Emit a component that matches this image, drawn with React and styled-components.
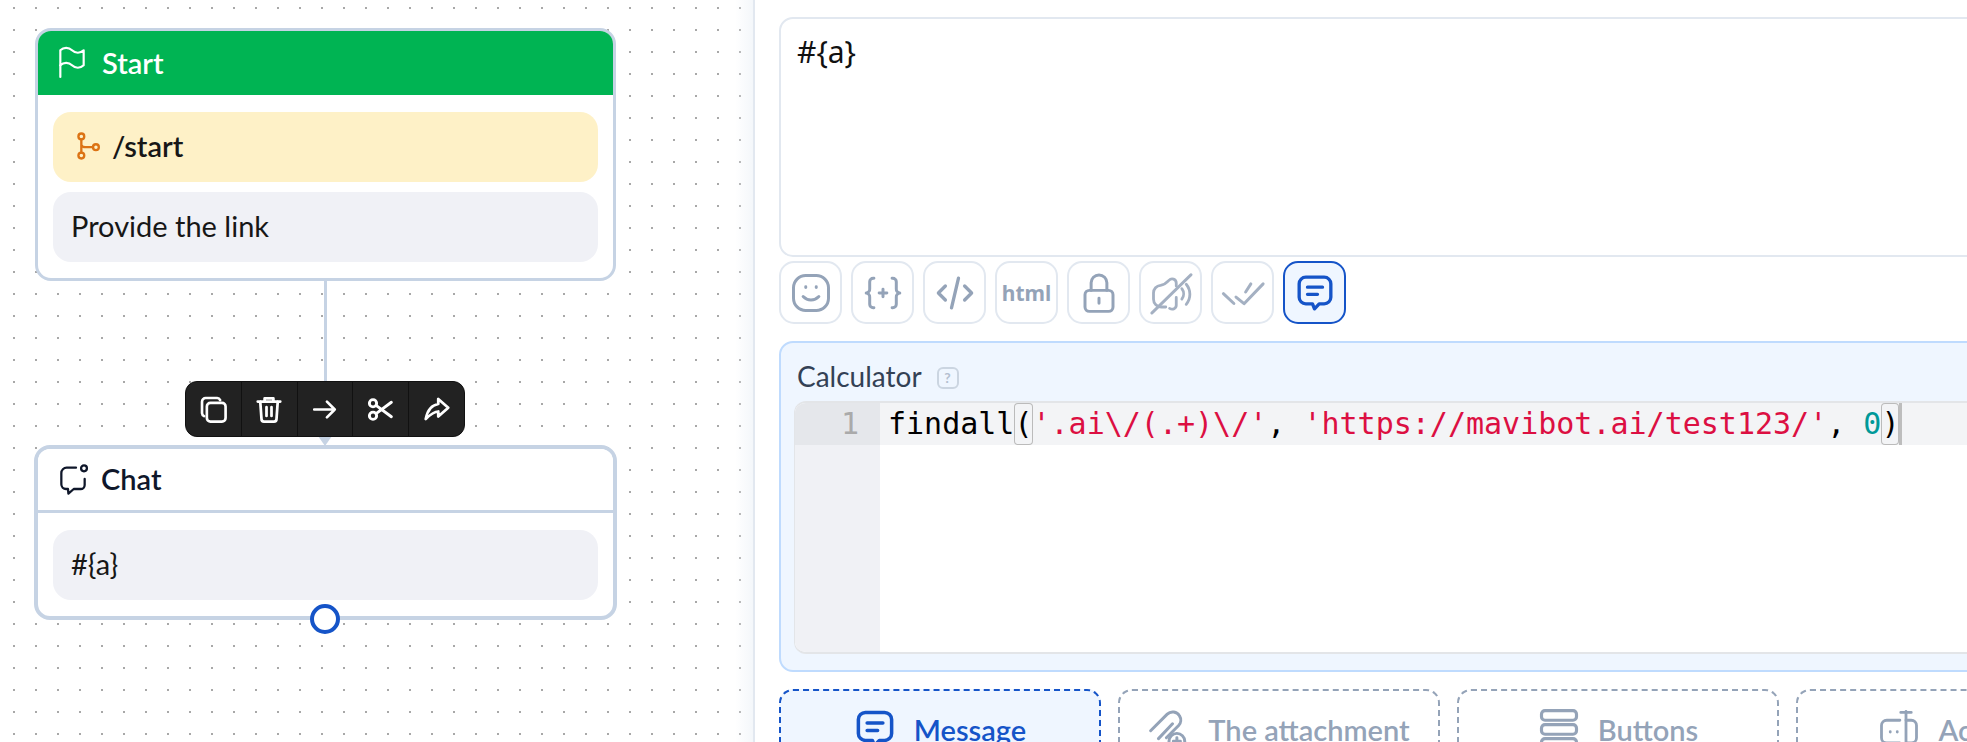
import React from "react";
import styled, { createGlobalStyle } from "styled-components";
import { TbShare3, TbFlag } from "react-icons/tb";

const GlobalStyle = createGlobalStyle`
  html, body {
    margin: 0;
    height: 100%;
    background: #fff;
    overflow: hidden;
  }
  * { box-sizing: border-box; }
`;

const Page = styled.div`
  display: flex;
  width: 1967px;
  height: 742px;
  overflow: hidden;
  font-family: Lato, "Noto Sans", sans-serif;
`;

/* flow canvas */
const Canvas = styled.div`
  position: relative;
  flex: 0 0 755px;
  height: 742px;
  border-right: 2px solid #e2e8f0;
  background-color: #fff;
  background-image:
    linear-gradient(90deg, rgba(241, 245, 249, 0) 735px, rgba(241, 245, 249, 0.8) 753px),
    radial-gradient(circle at center, #a8a8a8 1.2px, transparent 1.5px);
  background-size: 100% 100%, 22px 22px;
  background-position: 0 0, 3px -3px;
`;

const Node = styled.div`
  position: absolute;
  left: ${(p) => p.$x}px;
  top: ${(p) => p.$y}px;
  width: ${(p) => p.$w}px;
  background: #fff;
  border: ${(p) => (p.$selected ? "4px" : "3px")} solid #c6d3e4;
  border-radius: 16px;
  overflow: hidden;
`;

const NodeHead = styled.div`
  display: flex;
  align-items: center;
  gap: ${(p) => (p.$green ? "10px" : "11px")};
  height: 64px;
  padding-left: ${(p) => (p.$green ? "14px" : "20px")};
  padding-bottom: 2px;
  background: ${(p) => (p.$green ? "#00b453" : "#fff")};
  color: ${(p) => (p.$green ? "#fff" : "#0f172a")};
  border-bottom: ${(p) => (p.$green ? "0" : "3px solid #c6d3e4")};
  font-size: 29px;
  font-weight: 600;
`;

const NodeBody = styled.div`
  display: flex;
  flex-direction: column;
  gap: 10px;
  padding: 17px 15px 16px;
`;

const NodeItem = styled.div`
  display: flex;
  align-items: center;
  gap: 12px;
  height: 70px;
  padding: 0 0 3px ${(p) => (p.$yellow ? "19px" : "18px")};
  border-radius: 18px;
  background: ${(p) => (p.$yellow ? "#fef1c7" : "#f0f1f6")};
  color: #171717;
  font-size: 29px;
  font-weight: ${(p) => (p.$yellow ? 600 : 400)};
`;

const Edge = styled.div`
  position: absolute;
  left: 324px;
  top: 278px;
  width: 3px;
  height: 162px;
  background: #c6d3e4;
`;

const EdgeArrow = styled.div`
  position: absolute;
  left: 318px;
  top: 436px;
  border-left: 7px solid transparent;
  border-right: 7px solid transparent;
  border-top: 10px solid #c6d3e4;
`;

const NodeTools = styled.div`
  position: absolute;
  left: 185px;
  top: 381px;
  display: flex;
  width: 280px;
  height: 56px;
  border-radius: 12px;
  background: #222;
  border: 1px solid #111;
  overflow: hidden;
  z-index: 2;
`;

const NodeTool = styled.div`
  display: flex;
  flex: 1;
  align-items: center;
  justify-content: center;
  color: #fff;
  & + & { border-left: 1px solid #111; }
`;

const Handle = styled.div`
  position: absolute;
  left: 310px;
  top: 604px;
  width: 30px;
  height: 30px;
  border-radius: 50%;
  background: #fff;
  border: 4px solid #1554c8;
  z-index: 2;
`;

/* editor side */
const Panel = styled.div`
  flex: 0 0 1400px;
  display: flex;
  flex-direction: column;
  padding: 17px 24px 0;
  & > * { flex-shrink: 0; }
`;

const MessageBox = styled.div`
  height: 240px;
  padding: 15px 16px;
  border: 2px solid #e2e8f0;
  border-radius: 14px;
  font-family: "Noto Sans", sans-serif;
  font-size: 30px;
  line-height: 36px;
  color: #111;
`;

const ToolRow = styled.div`
  display: flex;
  gap: 9px;
  margin-top: 4px;
`;

const ToolBtn = styled.div`
  display: flex;
  align-items: center;
  justify-content: center;
  width: 63px;
  height: 63px;
  border-radius: 15px;
  border: 2px solid ${(p) => (p.$active ? "#1554c8" : "#e2e8f0")};
  background: ${(p) => (p.$active ? "#eff6ff" : "#fff")};
  color: ${(p) => (p.$active ? "#1554c8" : p.$soft ? "#a4b0c2" : "#94a3b8")};
`;

const HtmlLabel = styled.span`
  font-family: "Noto Sans", sans-serif;
  font-size: 21px;
  font-weight: 700;
`;

const CalcBox = styled.div`
  display: flex;
  flex-direction: column;
  height: 331px;
  margin-top: 17px;
  padding: 16px 13px 0;
  border: 2px solid #bfdbfe;
  border-radius: 14px;
  background: #eff6ff;
`;

const CalcLabel = styled.div`
  display: flex;
  align-items: center;
  gap: 15px;
  height: 34px;
  margin-left: 3px;
  color: #334155;
  font-size: 28px;
`;

const HelpMark = styled.span`
  display: flex;
  align-items: center;
  justify-content: center;
  width: 22px;
  height: 22px;
  margin-top: 3px;
  border: 2px solid #cbd5e1;
  border-radius: 6px;
  color: #b4c0d0;
  font-size: 14px;
  font-weight: 700;
`;

const Editor = styled.div`
  display: flex;
  height: 253px;
  margin-top: 8px;
  border-radius: 12px 0 0 12px;
  border-top: 2px solid #e3e5e8;
  border-bottom: 2px solid #e3e5e8;
  border-left: 1px solid #e3e5e8;
  background: #fff;
  overflow: hidden;
  font-family: "DejaVu Sans Mono", monospace;
  font-size: 30px;
`;

const Gutter = styled.div`
  flex: 0 0 85px;
  background: #f0f1f5;
`;

const GutterLine = styled.div`
  height: 42px;
  padding-right: 21px;
  background: #e5e7eb;
  color: #aaa;
  line-height: 42px;
  text-align: right;
`;

const CodeArea = styled.div`
  flex: 1;
`;

const CodeLine = styled.div`
  display: flex;
  height: 42px;
  padding-left: 8px;
  background: #f3f4f6;
  color: #000;
  line-height: 42px;
  white-space: pre;
`;

const Str = styled.span`
  color: #dc0f42;
`;

const Num = styled.span`
  color: #099;
`;

const Bracket = styled.span`
  box-shadow: inset 0 0 0 1px #bbb;
  border-radius: 4px;
`;

const Cursor = styled.span`
  width: 3px;
  height: 42px;
  background: #bdbdbd;
`;

const TabRow = styled.div`
  display: flex;
  gap: 17px;
  margin-top: 17px;
`;

const Tab = styled.div`
  display: flex;
  flex: 0 0 322px;
  align-items: center;
  justify-content: center;
  gap: 18px;
  height: 80px;
  border: 2px dashed ${(p) => (p.$active ? "#1554c8" : "#94a3b8")};
  border-radius: 14px;
  background: ${(p) => (p.$active ? "#eff6ff" : "#fff")};
  color: ${(p) => (p.$active ? "#1554c8" : "#94a3b8")};
  font-size: 29px;
  font-weight: 600;
`;

const Glyph = ({ size = 42, width = 2, children }) => (
  <svg
    width={size}
    height={size}
    viewBox="0 0 24 24"
    fill="none"
    stroke="currentColor"
    strokeWidth={width}
    strokeLinecap="round"
    strokeLinejoin="round"
    style={{ flexShrink: 0, overflow: "visible" }}
  >
    {children}
  </svg>
);

const BubbleIcon = (props) => (
  <Glyph {...props}>
    <path d="M6.5 2.5h11a4 4 0 0 1 4 4v8a4 4 0 0 1-4 4h-3l-2.8 3-1.2-3h-4a4 4 0 0 1-4-4v-8a4 4 0 0 1 4-4z" />
    <path d="M7.5 8.5h9M7.5 12.8h6" />
  </Glyph>
);

const SmileIcon = () => (
  <Glyph width={1.7}>
    <rect x="2" y="2" width="20" height="20" rx="7" />
    <path d="M9 8.4v.5M15 8.4v.5" />
    <path d="M7.5 14c2.5 2.6 6.5 2.6 9 0" />
  </Glyph>
);

const BracesIcon = () => (
  <Glyph width={1.7}>
    <path d="M6.8 3.6h-.4a2 2 0 0 0-2 2v4a2.2 2.2 0 0 1-2 2.4 2.2 2.2 0 0 1 2 2.4v4a2 2 0 0 0 2 2h.4" />
    <path d="M17.2 3.6h.4a2 2 0 0 1 2 2v4a2.2 2.2 0 0 0 2 2.4 2.2 2.2 0 0 0-2 2.4v4a2 2 0 0 1-2 2h-.4" />
    <path d="M12 9.8v4.4M9.8 12h4.4" />
  </Glyph>
);

const CodeIcon = () => (
  <Glyph width={1.9}>
    <path d="M6.5 8l-4 4 4 4M17.5 8l4 4-4 4M14 3.5l-4 17" />
  </Glyph>
);

const LockIcon = () => (
  <Glyph width={1.7}>
    <rect x="4" y="10.5" width="16" height="12" rx="2.5" />
    <path d="M7.5 10.5V6.2a4.5 4.5 0 0 1 9 0v4.3M12 15v2.8" />
  </Glyph>
);

const MutedIcon = () => (
  <Glyph width={1.6}>
    <path d="M9 20H6.500A4.500 4.500 0 0 1 2 15.500V12a4.400 4.400 0 0 1 4-4.400c2-.3 3.300-1.200 4.800-2.800C12.300 3.200 15 4 15 6.300V8" />
    <path d="M15 14.500V19c0 1.800-2 2.800-3.800 1.800" />
    <path d="M18.200 9.500a5 5 0 0 1 0 6M20.700 7a9 9 0 0 1 0 11.500" />
    <path d="M1 23.500L23.500 1.500" />
  </Glyph>
);

const ChecksIcon = () => (
  <Glyph width={1.7}>
    <path d="M.8 12.400l6 5.600M8 14.300l4.600 3.800L23.500 6.800M13.500 11.400l3-4.600" />
  </Glyph>
);

const CopyIcon = () => (
  <Glyph size={29} width={2.2}>
    <rect x="6.500" y="6.500" width="15.500" height="15.500" rx="3" />
    <path d="M17.500 4.200A3 3 0 0 0 15 2.500H5.500a3 3 0 0 0-3 3V15a3 3 0 0 0 1.700 2.500" />
  </Glyph>
);

const TrashIcon = () => (
  <Glyph size={30} width={2.2}>
    <path d="M3 6h18M8.500 6V3.500h7V6M5 6l1 14a2 2 0 0 0 2 2h8a2 2 0 0 0 2-2l1-14M10 10.500v7M14 10.500v7" />
  </Glyph>
);

const ArrowIcon = () => (
  <Glyph size={29} width={2.2}>
    <path d="M3.500 12h17M14 5.500l6.500 6.500-6.500 6.500" />
  </Glyph>
);

const ScissorsIcon = () => (
  <Glyph size={29} width={2.4}>
    <circle cx="5.800" cy="6.800" r="3" />
    <circle cx="5.800" cy="17.200" r="3" />
    <path d="M8.300 8.600L21 18M8.300 15.400L21 6" />
  </Glyph>
);

const BranchIcon = () => (
  <span style={{ color: "#dc7314", display: "flex" }}>
    <Glyph size={28} width={2}>
      <circle cx="8" cy="3.800" r="2.500" />
      <circle cx="8" cy="20.200" r="2.500" />
      <circle cx="20.500" cy="13" r="2.500" />
      <path d="M8 6.300v11.400M8 11c.5 1.400 1.800 2 3.500 2H18" />
    </Glyph>
  </span>
);

const ChatIcon = () => (
  <Glyph size={32} width={1.7}>
    <path d="M13.500 3.500H6.500A4 4 0 0 0 2.500 7.500V16a3.500 3.500 0 0 0 3.500 3.500h1.500l.300 3.500 4-3.500h5.200a3 3 0 0 0 3-3v-4.500" />
    <circle cx="19.500" cy="4" r="2.200" />
  </Glyph>
);

const ClipIcon = () => (
  <Glyph size={42} width={1.7}>
    <path d="M1.500 13L11 3.500a4.500 4.500 0 0 1 7 1 4.500 4.500 0 0 1-.5 5.500l-7 7" />
    <path d="M6 17.500l8-8.500M3 22l4 .5" />
    <circle cx="16.500" cy="19" r="4.500" />
    <path d="M16.500 17v4M14.500 19h4" />
  </Glyph>
);

const RowsIcon = () => (
  <Glyph size={42} width={1.8}>
    <rect x="2" y="1.500" width="20" height="5.500" rx="2" />
    <rect x="2" y="9.500" width="20" height="5.500" rx="2" />
    <rect x="2" y="17.500" width="20" height="5.500" rx="2" />
  </Glyph>
);

const ActionIcon = () => (
  <Glyph size={42} width={1.6}>
    <path d="M12.500 7H5a3 3 0 0 0-3 3v7a3 3 0 0 0 3 3h7.500" />
    <path d="M16 2v21M13 2.500h6M13 22.500h3" />
    <path d="M16 7h3a3 3 0 0 1 3 3v7a3 3 0 0 1-3 3h-3" />
    <path d="M7 13.500v.2M11 13.500v.2" />
  </Glyph>
);

export default function App() {
  return (
    <Page>
      <GlobalStyle />
      <Canvas>
        <Edge />
        <EdgeArrow />
        <Node $x={35} $y={28} $w={581}>
          <NodeHead $green>
            <TbFlag size={40} strokeWidth={1.3} />
            Start
          </NodeHead>
          <NodeBody>
            <NodeItem $yellow>
              <BranchIcon />
              /start
            </NodeItem>
            <NodeItem>Provide the link</NodeItem>
          </NodeBody>
        </Node>
        <NodeTools>
          <NodeTool><CopyIcon /></NodeTool>
          <NodeTool><TrashIcon /></NodeTool>
          <NodeTool><ArrowIcon /></NodeTool>
          <NodeTool><ScissorsIcon /></NodeTool>
          <NodeTool><TbShare3 size={30} strokeWidth={2.2} /></NodeTool>
        </NodeTools>
        <Node $x={34} $y={445} $w={583} $selected>
          <NodeHead>
            <ChatIcon />
            Chat
          </NodeHead>
          <NodeBody>
            <NodeItem>#{"{a}"}</NodeItem>
          </NodeBody>
        </Node>
        <Handle />
      </Canvas>
      <Panel>
        <MessageBox>#{"{a}"}</MessageBox>
        <ToolRow>
          <ToolBtn><SmileIcon /></ToolBtn>
          <ToolBtn><BracesIcon /></ToolBtn>
          <ToolBtn><CodeIcon /></ToolBtn>
          <ToolBtn><HtmlLabel>html</HtmlLabel></ToolBtn>
          <ToolBtn><LockIcon /></ToolBtn>
          <ToolBtn $soft><MutedIcon /></ToolBtn>
          <ToolBtn $soft><ChecksIcon /></ToolBtn>
          <ToolBtn $active><BubbleIcon size={40} /></ToolBtn>
        </ToolRow>
        <CalcBox>
          <CalcLabel>
            Calculator
            <HelpMark>?</HelpMark>
          </CalcLabel>
          <Editor>
            <Gutter>
              <GutterLine>1</GutterLine>
            </Gutter>
            <CodeArea>
              <CodeLine>
                findall<Bracket>(</Bracket>
                <Str>'.ai\/(.+)\/'</Str>, <Str>'https://mavibot.ai/test123/'</Str>, <Num>0</Num>
                <Bracket>)</Bracket>
                <Cursor />
              </CodeLine>
            </CodeArea>
          </Editor>
        </CalcBox>
        <TabRow>
          <Tab $active><BubbleIcon size={42} />Message</Tab>
          <Tab><ClipIcon />The attachment</Tab>
          <Tab><RowsIcon />Buttons</Tab>
          <Tab><ActionIcon />Actions</Tab>
        </TabRow>
      </Panel>
    </Page>
  );
}
